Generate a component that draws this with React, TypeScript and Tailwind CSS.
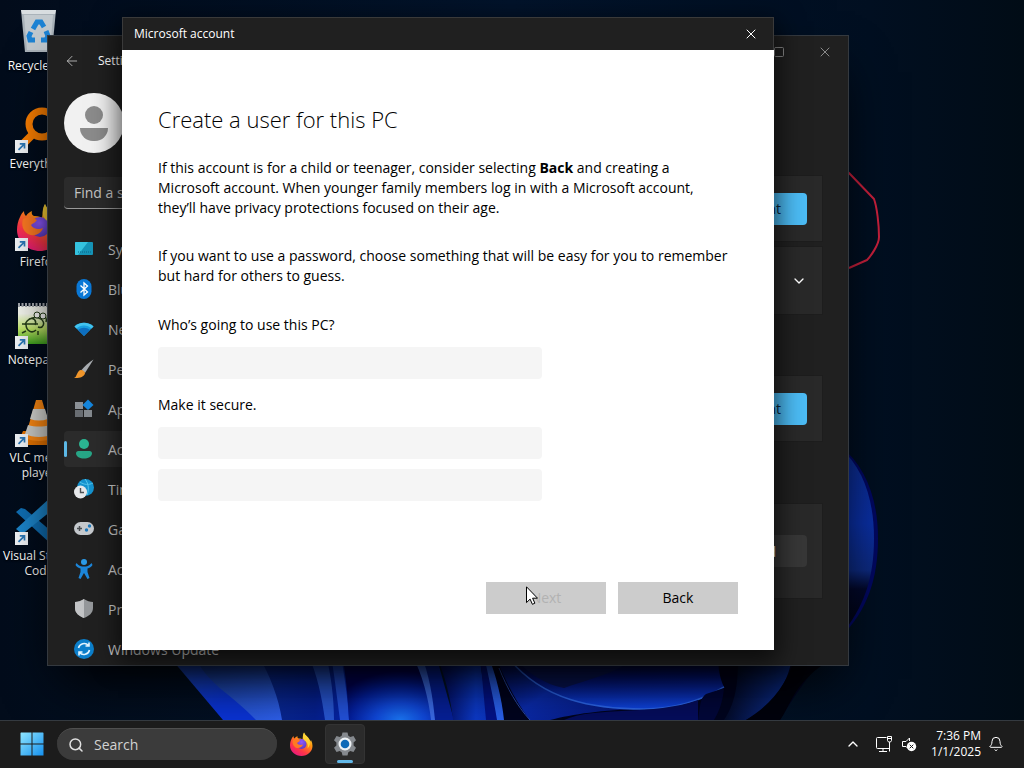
import React from "react";
import {
  ArrowLeft,
  Bell,
  ChevronDown,
  ChevronUp,
  Search,
  Square,
  X,
} from "lucide-react";

interface IconItem {
  label: string;
  icon: React.ReactNode;
}

/* ---------- Shared artwork ---------- */

const FirefoxLogo: React.FC<{ id: string; className: string }> = ({
  id,
  className,
}) => (
  <svg viewBox="0 0 48 48" className={className} aria-hidden="true">
    <defs>
      <linearGradient id={`${id}-fire`} x1="0.85" y1="0" x2="0.2" y2="1">
        <stop offset="0" stopColor="#fff44f" />
        <stop offset="0.35" stopColor="#ff980e" />
        <stop offset="0.7" stopColor="#ff3647" />
        <stop offset="1" stopColor="#e31587" />
      </linearGradient>
      <radialGradient id={`${id}-globe`} cx="0.5" cy="0.3" r="0.7">
        <stop offset="0" stopColor="#9059ff" />
        <stop offset="1" stopColor="#5b3bc4" />
      </radialGradient>
    </defs>
    <path
      d="M5 14c1-3 3-5 4-6 0 3 1 4 2 5 2-3 4-4 6-5-1 3 1 5 3 5 4 0 6 1 7 2 1-5 0-9 3-14 2 6 8 8 11 14 1 1 2 2 2 4 1-1 1-2 1-3 2 4 3 8 3 12 0 11-10 20-22 20S2 39 2 27c0-5 1-9 3-13z"
      fill={`url(#${id}-fire)`}
    />
    <circle cx="25" cy="24" r="10" fill={`url(#${id}-globe)`} />
    <path
      d="M8 16c5-3 10-2 14 1-2 3-4 3-6 5 2 4 8 5 12 3-2 6-9 9-15 6-5-3-7-9-5-15z"
      fill="#ff7a22"
    />
    <path
      d="M30 1c2 6 8 8 11 15 2 6 1 12-4 17 2-8-1-13-6-16-4-4-4-9-1-16z"
      fill="#ffd83a"
      opacity="0.85"
    />
  </svg>
);

const Shortcut: React.FC = () => (
  <svg
    viewBox="0 0 13 13"
    className="absolute bottom-0 left-0 h-[13px] w-[13px]"
    aria-hidden="true"
  >
    <rect width="13" height="13" fill="#f4f7fa" />
    <path
      d="M3.5 9.8 9 4.3M4.8 3.8h4.7v4.7"
      fill="none"
      stroke="#2b78b8"
      strokeWidth="1.7"
    />
  </svg>
);

/* ---------- Wallpaper ---------- */

const Wallpaper: React.FC = () => (
  <svg
    viewBox="0 0 1024 720"
    preserveAspectRatio="xMidYMax slice"
    className="absolute inset-0 h-full w-full"
    aria-hidden="true"
  >
    <defs>
      <linearGradient id="sky" x1="0" y1="0" x2="1" y2="0">
        <stop offset="0" stopColor="#020c1b" />
        <stop offset="0.5" stopColor="#03142c" />
        <stop offset="0.85" stopColor="#010f21" />
        <stop offset="1" stopColor="#010c16" />
      </linearGradient>
      <linearGradient id="outer" x1="0" y1="0" x2="1" y2="1">
        <stop offset="0" stopColor="#2456c8" />
        <stop offset="0.5" stopColor="#0a34d8" />
      </linearGradient>
      <linearGradient id="inner" x1="0" y1="0" x2="0.8" y2="1">
        <stop offset="0" stopColor="#143a94" />
        <stop offset="1" stopColor="#2f62f2" />
      </linearGradient>
      <linearGradient id="mid" x1="0" y1="0" x2="1" y2="0">
        <stop offset="0" stopColor="#0a2a94" />
        <stop offset="0.6" stopColor="#052090" />
        <stop offset="1" stopColor="#0525b0" />
      </linearGradient>
      <radialGradient id="glow" cx="0.62" cy="1" r="0.75">
        <stop offset="0" stopColor="#1b78f8" />
        <stop offset="0.35" stopColor="#1048dc" />
        <stop offset="0.7" stopColor="#0420a0" />
        <stop offset="1" stopColor="#00035a" />
      </radialGradient>
      <linearGradient id="strip" x1="0" y1="0" x2="1" y2="0">
        <stop offset="0" stopColor="#010550" />
        <stop offset="0.75" stopColor="#0c3aca" />
        <stop offset="1" stopColor="#0b34c0" />
      </linearGradient>
      <linearGradient id="bowl" x1="0.4" y1="0" x2="0.5" y2="1">
        <stop offset="0" stopColor="#010325" />
        <stop offset="0.4" stopColor="#03117a" />
        <stop offset="1" stopColor="#0f46e6" />
      </linearGradient>
      <linearGradient id="lip" x1="0" y1="0" x2="1" y2="0.6">
        <stop offset="0" stopColor="#020a4a" />
        <stop offset="0.5" stopColor="#0a2cb0" />
        <stop offset="1" stopColor="#06187c" />
      </linearGradient>
      <linearGradient id="leaf" x1="0" y1="0" x2="1" y2="0.2">
        <stop offset="0" stopColor="#01020f" />
        <stop offset="1" stopColor="#0c2f94" />
      </linearGradient>
      <linearGradient id="side" x1="0" y1="0" x2="0" y2="1">
        <stop offset="0" stopColor="#0c2c8e" />
        <stop offset="0.4" stopColor="#0a2fa4" />
        <stop offset="0.65" stopColor="#0d2a80" />
        <stop offset="0.75" stopColor="#02082a" />
        <stop offset="1" stopColor="#01030f" />
      </linearGradient>
    </defs>
    <rect width="1024" height="720" fill="url(#sky)" />
    {/* Left petals */}
    <path d="M168 655 223 720h130V655z" fill="url(#outer)" />
    <path d="M194 655c14 30 34 36 62 65h60l-40-65z" fill="url(#inner)" />
    <path d="M258 655c12 20 21 44 24 65h70v-65z" fill="url(#mid)" />
    <path d="M308 655c9 18 14 43 17 65h9c0-22-3-45-8-65z" fill="#2857d4" />
    <path d="M331 655c3 18 6 43 9 65h9c-1-22-5-45-8-65z" fill="#2352dd" />
    {/* Centre glow */}
    <path d="M342 655c4 20 6 44 7 65h87l-18-65z" fill="url(#glow)" />
    <path d="M414 655c10 18 16 44 18 65h22l-18-65z" fill="#06209a" />
    <path d="M412 655c10 18 17 45 19 65h4c-2-22-6-47-14-65z" fill="#3b6cea" />
    <path d="M436 655c9 20 15 45 17 65h36l-10-65z" fill="url(#strip)" />
    <path d="M480 655l6 65h18l-14-65z" fill="#03128a" />
    <path d="M484 655c4 20 10 45 13 65h8c-3-22-8-45-16-65z" fill="#2a62f0" />
    {/* Bowl shaped petal */}
    <path d="M488 655c8 20 14 44 16 65h276c14-24 28-44 46-65z" fill="#01041f" />
    <path
      d="M496 658c10 24 20 44 34 62h20c24-6 50-10 94-11-50-2-100-14-134-50z"
      fill="url(#lip)"
    />
    <path
      d="M499 668c8 20 18 38 31 52"
      fill="none"
      stroke="#2a4bb0"
      strokeWidth="1"
    />
    <path
      d="M510 660c34 40 82 49 134 49 34 0 60-10 80-22-4-8-6-18-6-32z"
      fill="url(#bowl)"
    />
    <path
      d="M510 660c34 40 82 49 134 49 34 0 60-10 80-22"
      fill="none"
      stroke="#2d68ee"
      strokeWidth="1.500"
    />
    <path d="M516 660h116c-18 14-46 20-68 28-20-4-34-14-48-28z" fill="#0a175c" />
    <path d="M564 720c30-14 90-4 134-20v20z" fill="#050d5e" />
    <path d="M724 688c-1 12-4 22-10 32h-16c2-14 2-22 8-26z" fill="#02073a" />
    <path d="M724 720c14-20 14-45 14-65h54c-2 24-16 50-46 65z" fill="url(#leaf)" />
    <path d="M796 655c-8 26-22 48-50 65h34c10-14 14-36 44-56z" fill="#01020c" />
    {/* Right petal */}
    <path d="M840 446c26 20 38 54 38 92 0 40-10 72-38 100z" fill="#020860" />
    <path d="M840 448c24 20 34 54 34 90 0 40-10 70-34 98z" fill="url(#side)" />
    {/* Pen stroke */}
    <path
      d="m836 163 13 10 25 26c3 8 5 26 5 38 0 8-9 20-12 23l-18 8"
      fill="none"
      stroke="#c8203c"
      strokeWidth="2"
      strokeLinejoin="round"
    />
  </svg>
);

/* ---------- Desktop shortcuts ---------- */

const desktopItems: IconItem[] = [
  {
    label: "Recycle Bin",
    icon: (
      <svg viewBox="0 0 48 48" className="h-12 w-12" aria-hidden="true">
        <path d="M6 3 41 3 37 45H10z" fill="#aab3ba" />
        <path d="M6 3h35l-1 4H7z" fill="#d9dee1" />
        <path d="M9 8h29l-3 35H12z" fill="#c3cacf" />
        <path
          d="m18 22 4-7h4l3 5m2 4 2 5-2 4h-5m-6 0h-5l-1-4 2-4"
          fill="none"
          stroke="#1d83d4"
          strokeWidth="5"
        />
      </svg>
    ),
  },
  {
    label: "Everything",
    icon: (
      <>
        <svg viewBox="0 0 48 48" className="h-12 w-12" aria-hidden="true">
          <circle
            cx="27"
            cy="19"
            r="13"
            fill="none"
            stroke="#ff8000"
            strokeWidth="7"
          />
          <path d="m18 29-14 14" stroke="#ff8000" strokeWidth="8" />
        </svg>
        <Shortcut />
      </>
    ),
  },
  {
    label: "Firefox",
    icon: (
      <>
        <FirefoxLogo id="ff-desktop" className="h-12 w-12" />
        <Shortcut />
      </>
    ),
  },
  {
    label: "Notepad++",
    icon: (
      <>
        <svg viewBox="0 0 48 48" className="h-12 w-12" aria-hidden="true">
          <defs>
            <linearGradient id="npp" x1="0" y1="0" x2="0" y2="1">
              <stop offset="0.2" stopColor="#f6f8f0" />
              <stop offset="0.6" stopColor="#c4ea6a" />
              <stop offset="1" stopColor="#3fa51e" />
            </linearGradient>
          </defs>
          <path d="M3 5h36l6 6v32H3z" fill="url(#npp)" />
          <path
            d="M3 4h34"
            stroke="#a4a8ae"
            strokeWidth="4"
            strokeDasharray="2 1.5"
          />
          <path
            d="M10 24c2-7 10-9 16-6 5 4 2 10-3 8m-12-3c0 7 6 10 10 6M7 23h16m-9-5c5-2 8 2 6 6m7-9c4 0 5 3 4 6M11 30l-4 2m16-2v4"
            fill="none"
            stroke="#27401a"
            strokeWidth="1.500"
          />
          <circle cx="22" cy="14" r="3" fill="#fff" stroke="#27401a" />
          <circle cx="28" cy="15" r="3" fill="#fff" stroke="#27401a" />
        </svg>
        <Shortcut />
      </>
    ),
  },
  {
    label: "VLC media player",
    icon: (
      <>
        <svg viewBox="0 0 48 48" className="h-12 w-12" aria-hidden="true">
          <path d="M8 32h32l6 14H2z" fill="#e87400" />
          <path d="M21 1h6l11 38c-8 4-20 4-28 0z" fill="#ff8a12" />
          <path d="m18 10 12 0 3 10c-6 2-12 2-18 0z" fill="#d8d8d4" />
          <path d="m13 26c7 2 15 2 22 0l3 9c-8 4-20 4-28 0z" fill="#cfcfca" />
        </svg>
        <Shortcut />
      </>
    ),
  },
  {
    label: "Visual Studio Code",
    icon: (
      <>
        <svg viewBox="0 0 48 48" className="h-12 w-12" aria-hidden="true">
          <path d="M34 1 46 6v36l-12 5z" fill="#259ce8" />
          <path d="m1 15 5-4 4 1 26 22v13z" fill="#0f6fb5" />
          <path d="M1 32 36 0v14L10 35l-4 1z" fill="#1c86cc" />
        </svg>
        <Shortcut />
      </>
    ),
  },
];

const DesktopIcons: React.FC = () => (
  <ul className="relative flex w-[78px] flex-col gap-1 pt-[7px]">
    {desktopItems.map((item) => (
      <li key={item.label} className="h-[94px]">
        <a
          href="#"
          className="flex flex-col items-center gap-[3px] text-center text-[12px] leading-[15px] text-white"
        >
          <span className="relative">{item.icon}</span>
          <span className="w-full [text-shadow:0_1px_2px_#000]">
            {item.label}
          </span>
        </a>
      </li>
    ))}
  </ul>
);

/* ---------- Settings window ---------- */

const navItems: IconItem[] = [
  {
    label: "System",
    icon: (
      <>
        <rect x="1" y="3" width="18" height="13" rx="1" fill="#1695b8" />
        <path d="M1 4a1 1 0 0 1 1-1h12L4 16H2a1 1 0 0 1-1-1z" fill="#35c3df" />
        <path d="M4 13h13" stroke="#0a6488" strokeDasharray="1 1" />
      </>
    ),
  },
  {
    label: "Bluetooth & devices",
    icon: (
      <>
        <rect x="2.5" y="0" width="15" height="20" rx="7.5" fill="#0a78d6" />
        <path
          d="m6.5 6.5 7 6.5-3.5 3V4l3.5 3-7 6.5"
          fill="none"
          stroke="#fff"
          strokeWidth="1.3"
        />
      </>
    ),
  },
  {
    label: "Network & internet",
    icon: (
      <>
        <path d="M0.5 7.5c5-5 14-5 19 0L10 17z" fill="#1aa0e0" />
        <path d="M4 11c3.500-3 8.500-3 12 0l-6 6z" fill="#0e6fc0" />
        <path d="M0.500 7.500c5-5 14-5 19 0l-2 2c-4-4-11-4-15 0z" fill="#43c4ef" />
      </>
    ),
  },
  {
    label: "Personalization",
    icon: (
      <>
        <path d="M19.500 0.500 11 14l-3.500-3C11 7 15 3 19.500 0.500z" fill="#a9adb1" />
        <path d="M7 11c2 0 4 1.500 4 3.500C10 18 5 19.500 0 19c2-1 2-2 3-4s2-4 4-4z" fill="#f0962b" />
      </>
    ),
  },
  {
    label: "Apps",
    icon: (
      <>
        <path d="M1 3h8v7H1z" fill="#8b9096" />
        <path d="M1 11h8v7H1z" fill="#696d72" />
        <path d="M10 11h8v7h-8z" fill="#84898e" />
        <path d="m14 0.500 5.500 5.500-5.500 5L8.500 6z" fill="#1485dc" />
      </>
    ),
  },
  {
    label: "Accounts",
    icon: (
      <>
        <circle cx="10" cy="5" r="5" fill="#2bb592" />
        <path d="M2 14.500A2.500 2.500 0 0 1 4.500 12h11a2.500 2.500 0 0 1 2.500 2.500c0 3-4 5-8 5s-8-2-8-5z" fill="#27a586" />
      </>
    ),
  },
  {
    label: "Time & language",
    icon: (
      <>
        <circle cx="11.500" cy="8.500" r="8.500" fill="#1593cf" />
        <path d="M6 3c4 3 9 3 13 1M11 0c4 5 4 11 2 16" fill="none" stroke="#55c6ec" />
        <circle cx="6.500" cy="13" r="6.500" fill="#e6e8ea" />
        <path d="M6.500 9v4.500H10" fill="none" stroke="#4c5054" strokeWidth="1.400" />
      </>
    ),
  },
  {
    label: "Gaming",
    icon: (
      <>
        <rect x="0" y="3" width="20" height="13" rx="6.500" fill="#c5c9cd" />
        <path d="M3 9.500h5M5.500 7v5" stroke="#4a4e52" strokeWidth="1.500" />
        <circle cx="15.500" cy="7" r="1.700" fill="#1d78bb" />
        <circle cx="12.500" cy="11" r="1.700" fill="#1d78bb" />
      </>
    ),
  },
  {
    label: "Accessibility",
    icon: (
      <>
        <circle cx="10" cy="3" r="3" fill="#2c9be8" />
        <path
          d="M2.500 4c2 3 5 3.500 7.500 3.500S15.500 7 17.500 4l1 2c-1 2-3 3-5 3.500V13l2 6-2 1L10 14l-3.500 6-2-1 2-6V9.500c-2-.5-4-1.500-5-3.500z"
          fill="#1c86da"
        />
      </>
    ),
  },
  {
    label: "Privacy & security",
    icon: (
      <>
        <path d="M10 0c3 2 6 3 9 3v6c0 5-4 8-9 10-5-2-9-5-9-10V3c3 0 6-1 9-3z" fill="#95989b" />
        <path d="M10 0v19C5 17 1 14 1 9V3c3 0 6-1 9-3z" fill="#c2c4c6" />
      </>
    ),
  },
  {
    label: "Windows Update",
    icon: (
      <>
        <circle cx="10" cy="10" r="10" fill="#0c7fcb" />
        <path
          d="M4.500 9a5.800 5.800 0 0 1 10-2.500M15.500 11a5.800 5.800 0 0 1-10 2.500M15 3.500v3.500h-3.500M5 16.500V13h3.500"
          fill="none"
          stroke="#e2f4ff"
          strokeWidth="1.600"
        />
      </>
    ),
  },
];

const SettingsNav: React.FC = () => (
  <aside className="w-[280px] px-4">
    <header className="flex h-[49px] items-center gap-[18px] text-[12px] text-white">
      <button type="button" aria-label="Go back">
        <ArrowLeft className="h-4 w-4 text-[#c8c8c8]" strokeWidth={1.25} />
      </button>
      <span>Settings</span>
    </header>

    {/* Account picture */}
    <div className="mt-2 flex h-[60px] w-[60px] flex-col items-center justify-center gap-1 rounded-full bg-[#f1f1f1]">
      <span className="h-[18px] w-[18px] rounded-full bg-[#8b8b8b]" />
      <span className="h-[13px] w-7 rounded-t-md rounded-b-full bg-[#8b8b8b]" />
    </div>

    <input
      type="search"
      aria-label="Find a setting"
      placeholder="Find a setting"
      className="mt-6 block h-8 w-full rounded border-b border-[#9a9a9a] bg-[#2b2b2b] px-[10px] text-[14px] text-white placeholder:text-[#c4c4c4]"
    />

    <nav className="mt-[22px] flex flex-col gap-1">
      {navItems.map((item) => (
        <a
          key={item.label}
          href="#"
          className={
            item.label === "Accounts"
              ? "relative flex h-9 items-center gap-[14px] rounded bg-[#2b2b2b] pl-[10px] text-[14px] text-[#d0d0d0] before:absolute before:left-0 before:h-4 before:w-[3px] before:rounded-full before:bg-[#5cb8e6]"
              : "flex h-9 items-center gap-[14px] rounded pl-[10px] text-[14px] text-[#d0d0d0]"
          }
        >
          <svg viewBox="0 0 20 20" className="h-5 w-5" aria-hidden="true">
            {item.icon}
          </svg>
          {item.label}
        </a>
      ))}
    </nav>
  </aside>
);

const SettingsWindow: React.FC = () => (
  <section
    aria-label="Settings"
    className="absolute top-[35px] right-[175px] bottom-[54px] left-[47px] flex overflow-hidden border border-[#34393f] bg-[#202020] shadow-2xl shadow-black"
  >
    <SettingsNav />
    <div className="flex flex-1 flex-col">
      <div className="flex h-8 items-center justify-end gap-8 pr-[15px] text-[#8a8a8a]">
        <button type="button" aria-label="Maximize">
          <Square className="h-3 w-3" strokeWidth={2} />
        </button>
        <button type="button" aria-label="Close settings">
          <X className="h-4 w-4" strokeWidth={1.5} />
        </button>
      </div>
      <div className="mt-[107px] flex flex-col pr-[25px] text-[14px]">
        <div className="flex h-[67px] items-center justify-end border border-[#1d1d1d] bg-[#292929] pr-[15px]">
          <button type="button" className="h-8 rounded bg-[#4cbcf5] px-[26px] text-[#0b2638]">
            Add account
          </button>
        </div>
        <div className="mt-1 flex h-[69px] items-center justify-end border border-[#1d1d1d] bg-[#292929] pr-[15px]">
          <button type="button" aria-label="Expand">
            <ChevronDown className="h-4 w-4 text-white" strokeWidth={2} />
          </button>
        </div>
        <div className="mt-[60px] flex h-[67px] items-center justify-end border border-[#1d1d1d] bg-[#292929] pr-[15px]">
          <button type="button" className="h-8 rounded bg-[#4cbcf5] px-[26px] text-[#0b2638]">
            Add account
          </button>
        </div>
        <div className="mt-[61px] flex h-24 items-center justify-end border border-[#1d1d1d] bg-[#292929] pr-[15px]">
          <button type="button" className="h-8 rounded bg-[#373737] px-[31px] text-white">
            Get started
          </button>
        </div>
      </div>
    </div>
  </section>
);

/* ---------- Create user dialog ---------- */

const fieldStyles =
  "h-8 w-96 max-w-full rounded-sm bg-[#f5f5f5] px-3 text-[14px] text-black outline-none";

const CreateUserDialog: React.FC = () => (
  <div
    role="dialog"
    aria-labelledby="dialog-title"
    className="absolute top-[17px] right-[250px] bottom-[70px] left-[122px] flex flex-col bg-white shadow-[0_8px_24px_4px_rgba(0,0,0,0.65)]"
  >
    <header className="flex h-[33px] items-center justify-between border border-b-0 border-[#3a3a3a] bg-[#202020] pr-[14px] pl-[11px] text-white">
      <span className="text-[12px]">Microsoft account</span>
      <button type="button" aria-label="Close">
        <X className="h-4 w-4" strokeWidth={1.5} />
      </button>
    </header>

    <form
      className="flex flex-1 flex-col px-9 pt-[53px] pb-9 text-[14px] leading-5 text-black"
      onSubmit={(e) => e.preventDefault()}
    >
      <h1 id="dialog-title" className="text-[22px] leading-8 font-light">
        Create a user for this PC
      </h1>
      <p className="mt-[23px]">
        If this account is for a child or teenager, consider selecting{" "}
        <b>Back</b> and creating a
        <br />
        Microsoft account. When younger family members log in with a Microsoft
        account,
        <br />
        they’ll have privacy protections focused on their age.
      </p>
      <p className="mt-7">
        If you want to use a password, choose something that will be easy for
        you to remember
        <br />
        but hard for others to guess.
      </p>

      <label htmlFor="username" className="mt-[29px]">
        Who’s going to use this PC?
      </label>
      <input id="username" type="text" className={`mt-3 ${fieldStyles}`} />
      <label htmlFor="password" className="mt-4">
        Make it secure.
      </label>
      <input id="password" type="password" className={`mt-3 ${fieldStyles}`} />
      <input
        type="password"
        aria-label="Re-enter password"
        className={`mt-[10px] ${fieldStyles}`}
      />

      <div className="mt-auto flex justify-end gap-3">
        <div className="relative">
          <button
            type="submit"
            disabled
            className="h-8 w-[120px] bg-[#cccccc] text-[#b2b2b2]"
          >
            Next
          </button>
          {/* Mouse pointer */}
          <svg
            viewBox="0 0 12 19"
            className="absolute top-1 left-10 h-[19px] w-3"
            aria-hidden="true"
          >
            <path
              d="M0.500 0.800v15.800l3.600-3.500 2.300 5.200 2.500-1.100-2.300-5h4.900z"
              fill="#fff"
              stroke="#000"
            />
          </svg>
        </div>
        <button type="button" className="h-8 w-[120px] bg-[#cccccc]">
          Back
        </button>
      </div>
    </form>
  </div>
);

/* ---------- Taskbar ---------- */

const Taskbar: React.FC = () => (
  <footer className="relative flex h-12 items-center border-t border-[#343a40] bg-[#1c1c1c] px-5 pb-px text-white">
    <button type="button" aria-label="Start">
      <svg viewBox="0 0 24 24" className="h-6 w-6" aria-hidden="true">
        <defs>
          <linearGradient id="start" x1="0" y1="0" x2="1" y2="1">
            <stop offset="0" stopColor="#8fe6ff" />
            <stop offset="1" stopColor="#1590ee" />
          </linearGradient>
        </defs>
        <path
          d="M1 0.500h10.500v11H0.500V1zM12.500 0.500h10.500l0.500 0.500v10.500h-11zM0.500 12.500h11v11H0.500zM12.500 12.500h11v11h-11z"
          fill="url(#start)"
        />
      </svg>
    </button>
    <label className="ml-[13px] flex h-8 w-[220px] items-center gap-[10px] rounded-full border-t border-[#505050] bg-[#3b3b3b] pl-[11px]">
      <Search className="h-4 w-4 shrink-0 text-[#e0e0e0]" strokeWidth={2.25} />
      <input
        type="search"
        aria-label="Search"
        placeholder="Search"
        className="w-full min-w-0 bg-transparent pr-3 text-[14px] outline-none placeholder:text-[#d2d2d2]"
      />
    </label>
    <button type="button" aria-label="Firefox" className="ml-3">
      <FirefoxLogo id="ff-taskbar" className="h-6 w-6" />
    </button>
    <button
      type="button"
      aria-label="Settings"
      className="relative ml-3 flex h-10 w-10 items-center justify-center rounded border border-[#333333] bg-[#2b2b2b] after:absolute after:bottom-0 after:h-[3px] after:w-4 after:rounded-full after:bg-[#62b8e8]"
    >
      <svg viewBox="0 0 24 24" className="h-6 w-6" aria-hidden="true">
        <path
          d="M9.500 0.500h5l0.800 3.200 2 1.200 3.200-1 2.500 4.300-2.400 2.300v3l2.400 2.300-2.500 4.300-3.200-1-2 1.200-0.800 3.200h-5l-0.800-3.200-2-1.200-3.200 1L1 15.800l2.400-2.300v-3L1 8.200l2.500-4.300 3.200 1 2-1.200z"
          fill="#85898e"
        />
        <circle cx="12" cy="12" r="6.500" fill="#eef2f5" />
        <circle cx="12" cy="12" r="4.300" fill="#0f6ab8" />
      </svg>
    </button>

    {/* System tray */}
    <div className="ml-auto flex items-center">
      <button type="button" aria-label="Show hidden icons">
        <ChevronUp className="h-4 w-4" strokeWidth={2} />
      </button>
      <svg
        viewBox="0 0 18 18"
        className="ml-[14px] h-[18px] w-[18px]"
        fill="none"
        stroke="currentColor"
        role="img"
        aria-label="Network"
      >
        <path d="M11.500 2.500h-9a1 1 0 0 0-1 1v9a1 1 0 0 0 1 1h12v-5M8 13.500v2.500M4 16.500h8" />
        <path d="M12.500 1.500h4v4l-1 1.500h-2l-1-1.500zM12.500 3.500h4M14.500 7v9.500" />
      </svg>
      <svg
        viewBox="0 0 18 18"
        className="ml-2 h-[18px] w-[18px]"
        role="img"
        aria-label="Volume muted"
      >
        <path
          d="M8.500 6V3L5 6.500H1.500v5H5l1.500 1.500"
          fill="none"
          stroke="currentColor"
        />
        <circle cx="10.500" cy="11.500" r="4.700" fill="#fff" />
        <path d="m8.700 9.700 3.600 3.600m0-3.600-3.600 3.600" stroke="#1c1c1c" />
      </svg>
      <div className="ml-3 text-right text-[12px] leading-4">
        <div>7:36 PM</div>
        <div>1/1/2025</div>
      </div>
      <button type="button" aria-label="Notifications" className="ml-[7px]">
        <Bell className="h-4 w-4" strokeWidth={1.5} />
      </button>
    </div>
  </footer>
);

const App: React.FC = () => (
  <div className="flex h-screen flex-col overflow-hidden bg-[#020c1b] font-['Open_Sans','Noto_Sans',sans-serif]">
    <main className="relative flex-1">
      <Wallpaper />
      <DesktopIcons />
      <SettingsWindow />
      <CreateUserDialog />
    </main>
    <Taskbar />
  </div>
);

export default App;
